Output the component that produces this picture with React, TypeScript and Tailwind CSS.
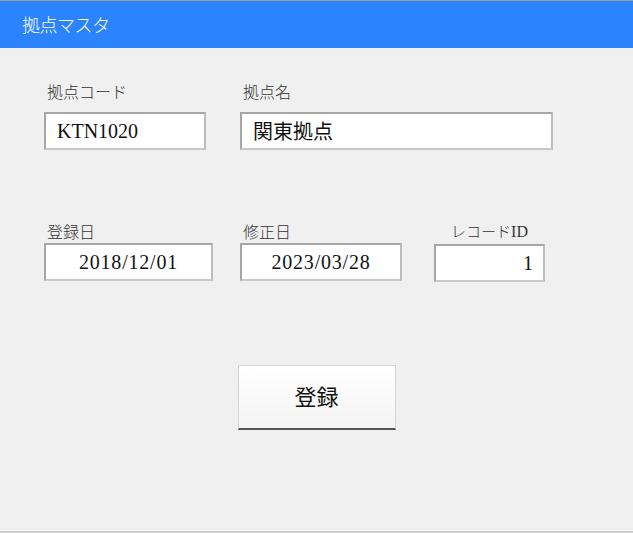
const label = 'text-[16px] leading-[20px] text-[#333] font-light';

function Field({
  value,
  className,
  align = 'left',
  jp = false,
}: {
  value: string;
  className: string;
  align?: 'left' | 'center' | 'right';
  jp?: boolean;
}) {
  const alignCls = align === 'center' ? 'justify-center' : align === 'right' ? 'justify-end pr-[10px]' : 'justify-start pl-[11px]';
  return (
    <div
      className={`h-[38px] flex items-center bg-white border-2 border-t-[#a6a6a6] border-l-[#a6a6a6] border-r-[#bdbdbd] border-b-[#c8c8c8] text-[20px] text-[#111] ${alignCls} ${className}`}
    >
      {jp ? (
        <span className="font-['Noto_Sans_CJK_JP',sans-serif]">{value}</span>
      ) : (
        <span className={`font-['Liberation_Serif',serif] ${align === 'center' ? 'tracking-[0.8px]' : ''}`}>{value}</span>
      )}
    </div>
  );
}

export default function App() {
  return (
    <div className="w-[633px] h-[533px] bg-[#f0f0f0] flex flex-col overflow-hidden font-['Noto_Sans_CJK_JP',sans-serif]">
      <div className="h-[48px] border-t border-[#9a9a9a] bg-[#2b84fe] flex items-center pl-[22px]">
        <span className="text-white text-[18px] font-light tracking-[-0.5px]">拠点マスタ</span>
      </div>

      <div className="flex-1 flex flex-col border-b-2 border-[#cfcfcf]">
        <div className="flex pl-[44px] pt-[33px]">
          <div className="w-[162px] flex flex-col">
            <span className={`pl-[3px] ${label}`}>拠点コード</span>
            <Field value="KTN1020" className="mt-[11px] w-[162px]" />
          </div>
          <div className="ml-[34px] flex flex-col">
            <span className={`pl-[3px] ${label}`}>拠点名</span>
            <Field value="関東拠点" className="mt-[11px] w-[313px]" jp />
          </div>
        </div>

        <div className="flex pl-[44px] pt-[71px]">
          <div className="w-[169px] flex flex-col">
            <span className={`pl-[3px] ${label}`}>登録日</span>
            <Field value="2018/12/01" align="center" className="mt-[2px] w-[169px]" />
          </div>
          <div className="ml-[27px] flex flex-col">
            <span className={`pl-[3px] ${label}`}>修正日</span>
            <Field value="2023/03/28" align="center" className="mt-[2px] w-[162px]" />
          </div>
          <div className="ml-[32px] flex flex-col items-center">
            <span className="text-[15px] leading-[20px] text-[#333] font-light">
              レコード<span className="text-[16px] font-['Liberation_Serif',serif]">ID</span>
            </span>
            <Field value="1" align="right" className="mt-[2px] w-[111px]" />
          </div>
        </div>

        <div className="flex justify-center pt-[83px]">
          <button className="w-[158px] h-[65px] bg-gradient-to-b from-white to-[#f4f4f4] border border-[#d4d4d4] border-b-2 border-b-[#555] text-[22px] text-[#111] pb-[3px]">
            登録
          </button>
        </div>
      </div>
    </div>
  );
}
